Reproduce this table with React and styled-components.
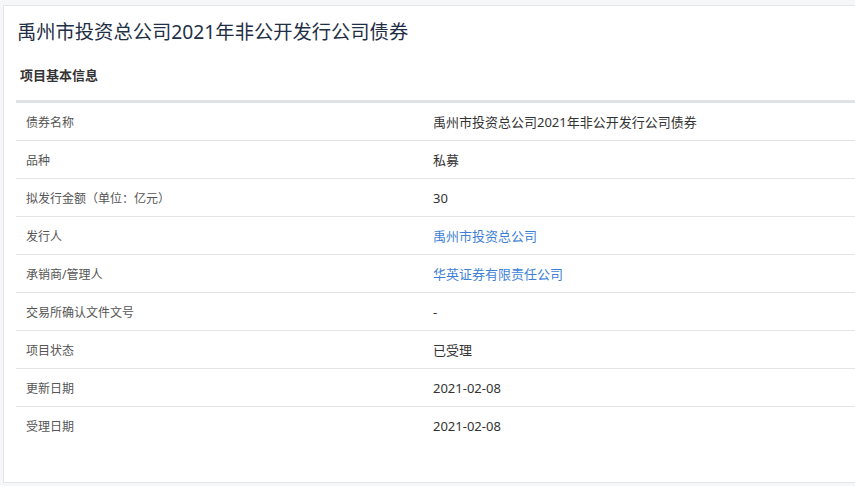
import React from "react";
import styled, { createGlobalStyle } from "styled-components";

const GlobalStyle = createGlobalStyle`
  html, body {
    margin: 0;
    padding: 0;
    background: #f6f7f9;
    overflow: hidden;
  }
  body {
    font-family: "Noto Sans", "Noto Sans CJK SC", sans-serif;
  }
`;

const rows = [
  { label: "债券名称", value: "禹州市投资总公司2021年非公开发行公司债券" },
  { label: "品种", value: "私募" },
  { label: "拟发行金额（单位：亿元）", value: "30" },
  { label: "发行人", value: "禹州市投资总公司", link: true },
  { label: "承销商/管理人", value: "华英证券有限责任公司", link: true },
  { label: "交易所确认文件文号", value: "-" },
  { label: "项目状态", value: "已受理" },
  { label: "更新日期", value: "2021-02-08" },
  { label: "受理日期", value: "2021-02-08" },
];

const App = () => {
  return (
    <>
      <GlobalStyle />
      <Page>
        <Card>
          <Title>禹州市投资总公司2021年非公开发行公司债券</Title>
          <SectionHead>项目基本信息</SectionHead>
          <Table>
            {rows.map((r, i) => (
              <Row key={r.label} last={i === rows.length - 1}>
                <Label>{r.label}</Label>
                <Value link={r.link}>{r.value}</Value>
              </Row>
            ))}
          </Table>
        </Card>
      </Page>
    </>
  );
};

export default App;

const Page = styled.div`
  padding: 5px 0 0 3px;
  height: 486px;
  box-sizing: border-box;
`;

const Card = styled.div`
  width: 880px;
  height: 478px;
  box-sizing: border-box;
  background: #fff;
  border: 1px solid #e3e5e8;
  padding: 12px 0 0 12px;
`;

const Title = styled.h1`
  margin: 0 0 0 1px;
  font-size: 19.3px;
  line-height: 28px;
  font-weight: 400;
  color: #1f2f46;
`;

const SectionHead = styled.div`
  padding: 20px 0 16px 4px;
  font-size: 13px;
  line-height: 18px;
  font-weight: 700;
  color: #333;
`;

const Table = styled.div`
  border-top: 3px solid #dfe2e6;
`;

const Row = styled.div`
  display: grid;
  grid-template-columns: 417px 1fr;
  align-items: center;
  height: 38px;
  box-sizing: border-box;
  border-bottom: ${(p) => (p.last ? "none" : "1px solid #e4e4e4")};
`;

const Label = styled.div`
  padding-left: 10px;
  font-size: 12px;
  color: #555;
`;

const Value = styled.div`
  font-size: 13px;
  color: ${(p) => (p.link ? "#3e7fd6" : "#333")};
`;
